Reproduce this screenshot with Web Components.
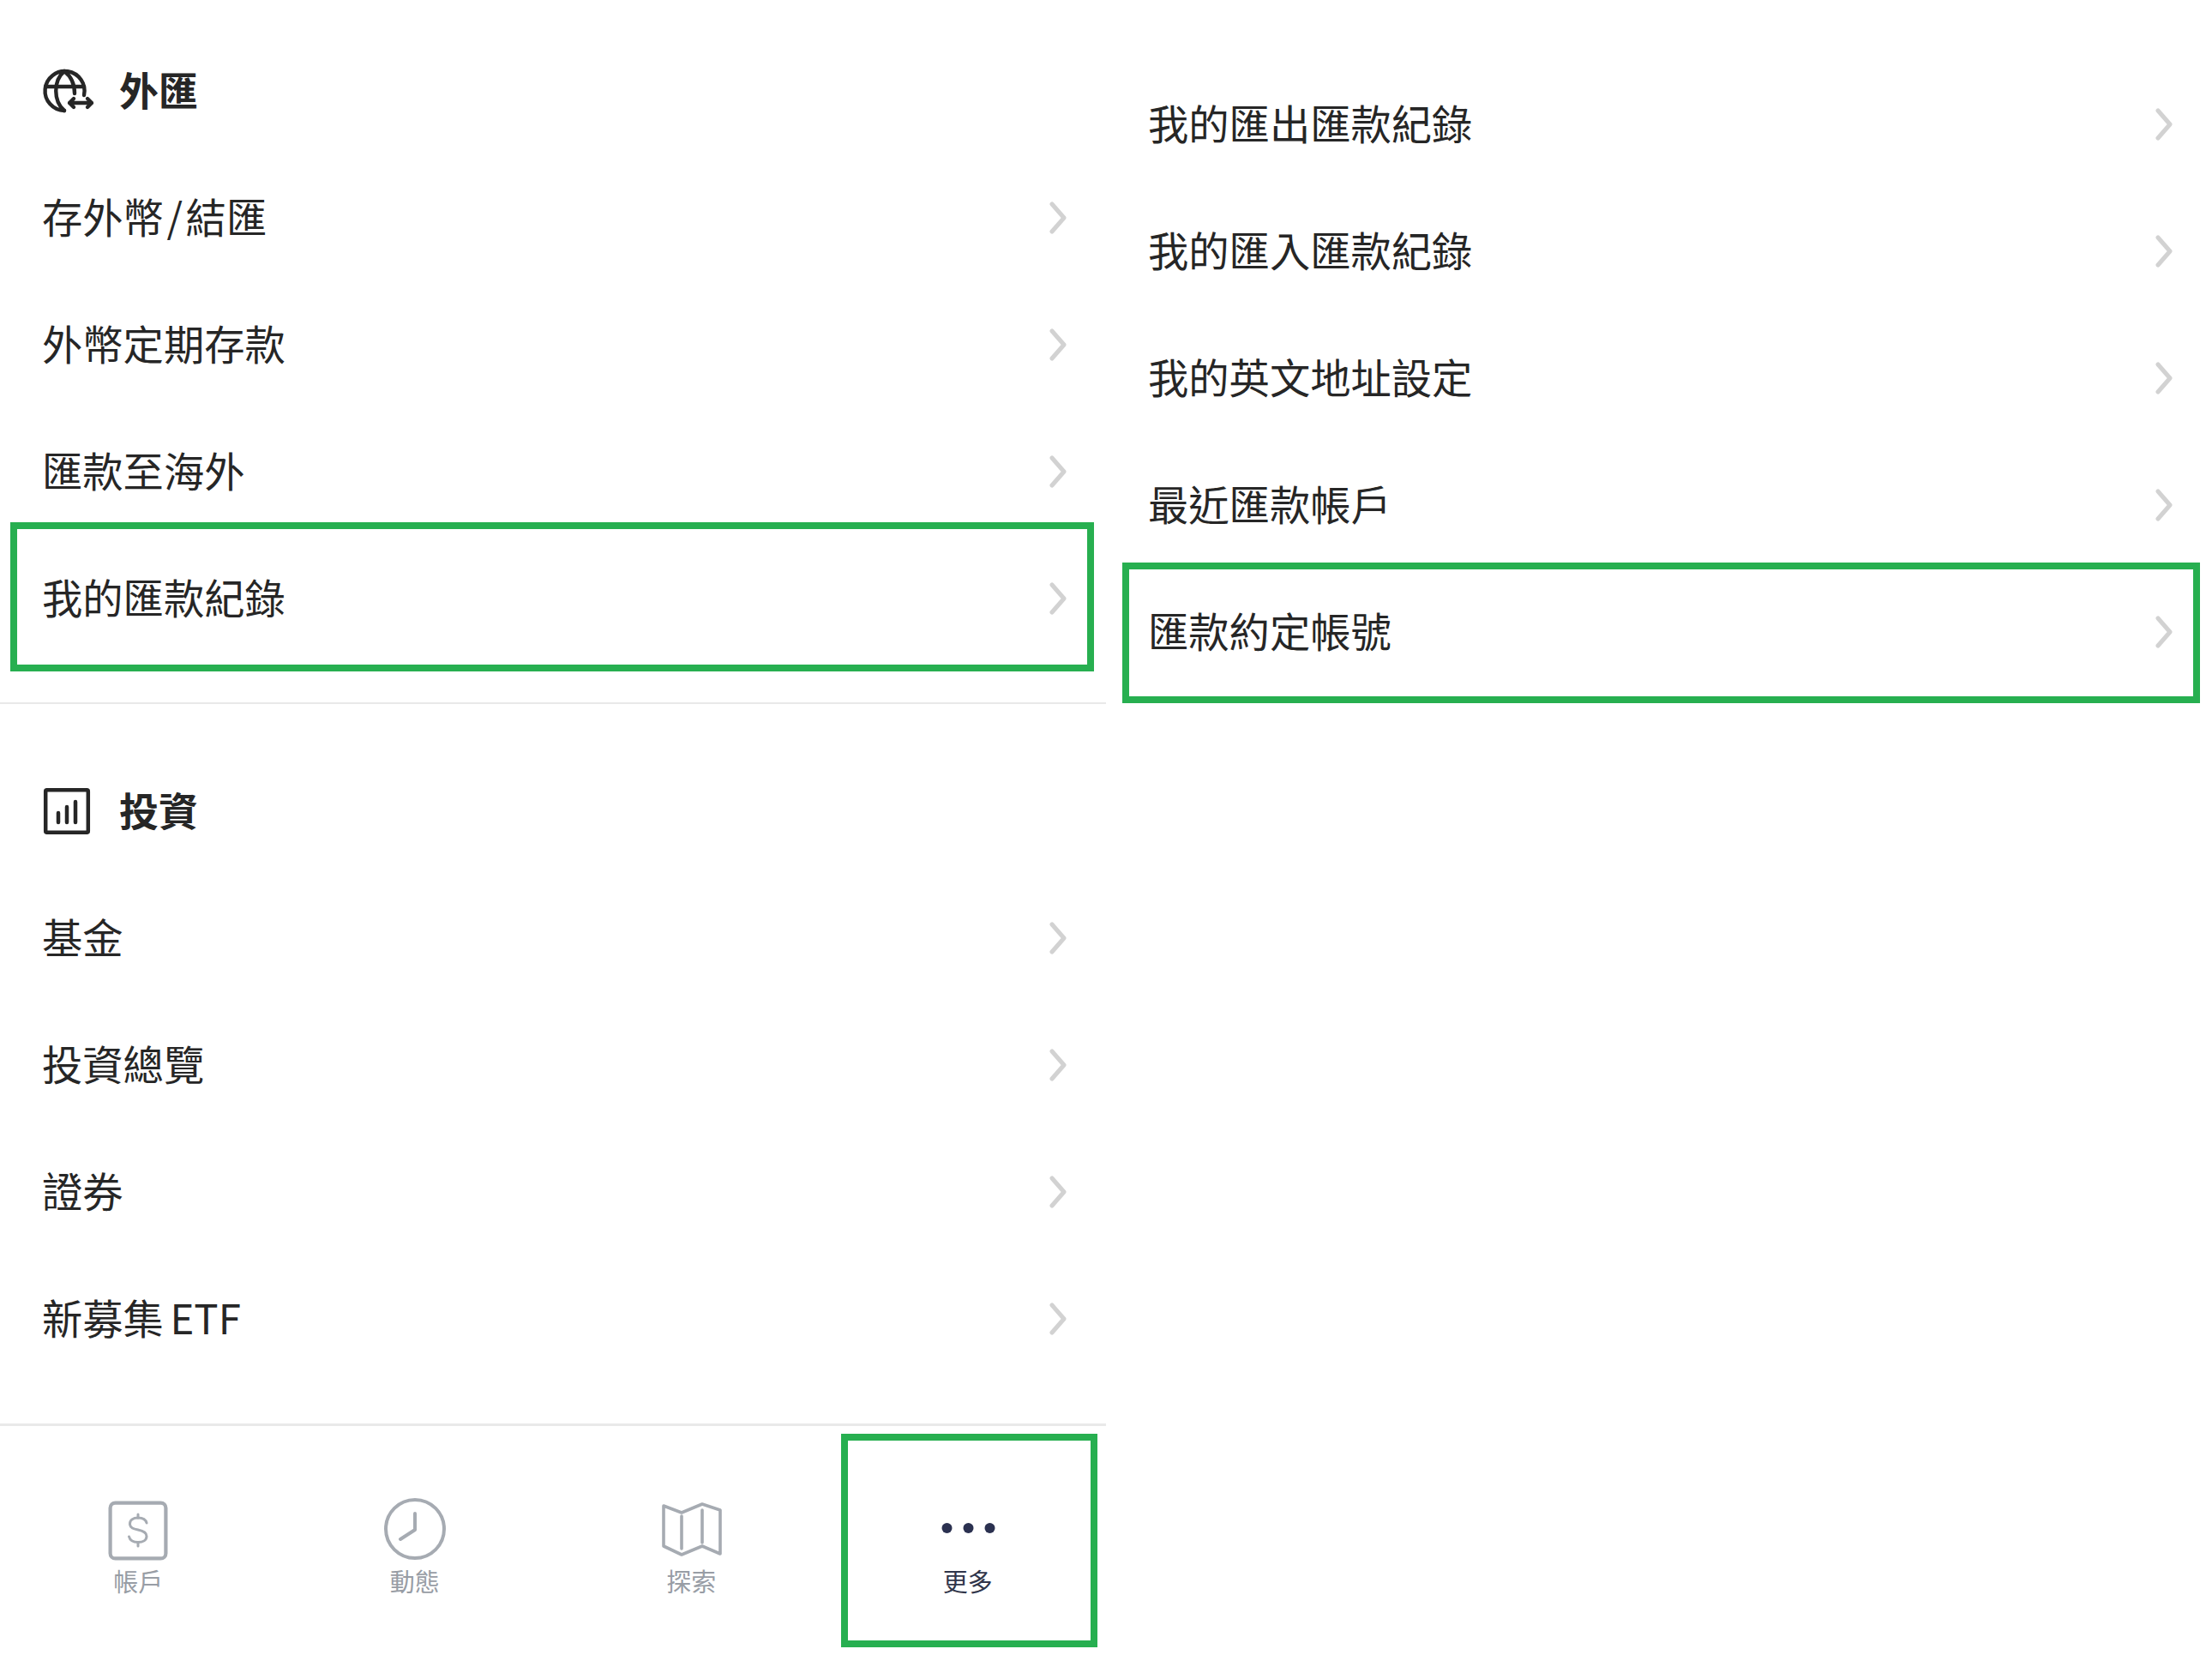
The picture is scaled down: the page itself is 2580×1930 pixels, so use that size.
<!DOCTYPE html>
<html lang="zh-Hant">
<head>
<meta charset="utf-8">
<title>更多</title>
<style>
  html, body { margin: 0; background: #fff; }
  body { font-family: "Noto Sans CJK TC", "Noto Sans", sans-serif; color: #262626; }
</style>
</head>
<body>
<more-page>
  <menu-panel slot="left" pad-top="31" class="left">
    <menu-section divider>
      <section-title label="外匯">
        <svg slot="icon" width="64" height="64" viewBox="0 0 64 64" fill="none" stroke="#262626" stroke-width="4.4" stroke-linecap="round" stroke-linejoin="round">
          <path d="M27 55A23 23 0 1 1 50 37"/>
          <path d="M27 9C14 20 14 44 27 55"/>
          <path d="M27 9C36 16 39 26 39 35"/>
          <path d="M5 27H50"/>
          <path d="M33 46H59M38 41L33 46L38 51M54 41L59 46L54 51"/>
        </svg>
      </section-title>
      <menu-row style="word-spacing:-7px">存外幣 / 結匯</menu-row>
      <menu-row>外幣定期存款</menu-row>
      <menu-row>匯款至海外</menu-row>
      <menu-row highlight style="--hl-top:-15px;--hl-bottom:-11px;--hl-left:12px;--hl-right:14px">我的匯款紀錄</menu-row>
    </menu-section>
    <menu-section>
      <section-title label="投資">
        <svg slot="icon" width="64" height="64" viewBox="0 0 64 64" fill="none" stroke="#262626" stroke-width="4.5" stroke-linecap="round" stroke-linejoin="round">
          <rect x="5.2" y="7.2" width="49.6" height="49.6" rx="1.5"/>
          <path d="M20 34V45M30 27V45M40 21V45"/>
        </svg>
      </section-title>
      <menu-row>基金</menu-row>
      <menu-row>投資總覽</menu-row>
      <menu-row>證券</menu-row>
      <menu-row style="word-spacing:-3px">新募集 ETF</menu-row>
    </menu-section>
    <tab-bar>
      <tab-item label="帳戶">
        <svg slot="icon" width="80" height="80" viewBox="0 0 80 80" fill="none" stroke="#a6abb2" stroke-width="4.2" stroke-linecap="round" stroke-linejoin="round">
          <rect x="7.6" y="9.6" width="64.8" height="64.8" rx="6"/>
          <path stroke-width="3" d="M50 33C49 29 45 27 40 27C34 27 30.5 30 30.5 34C30.5 39 35 40 40 41C45 42 50 44 50 48.5C50 53 45.5 55.5 40 55.5C34.5 55.5 30.5 53 29.5 49"/>
          <path stroke-width="3" d="M40 23V27M40 55.5V60"/>
        </svg>
      </tab-item>
      <tab-item label="動態">
        <svg slot="icon" width="80" height="80" viewBox="0 0 80 80" fill="none" stroke="#a6abb2" stroke-width="4" stroke-linecap="round" stroke-linejoin="round">
          <circle cx="40" cy="40" r="34"/>
          <path d="M40 22V41L23 52"/>
        </svg>
      </tab-item>
      <tab-item label="探索">
        <svg slot="icon" width="80" height="80" viewBox="0 0 80 80" fill="none" stroke="#a6abb2" stroke-width="3.6" stroke-linecap="round" stroke-linejoin="round">
          <path d="M8 13L29 21L53 11L74 18V69L53 60L29 70L8 60Z"/>
          <path d="M29 25V63M53 18V56"/>
        </svg>
      </tab-item>
      <tab-item label="更多" active>
        <svg slot="icon" width="80" height="80" viewBox="0 0 80 80" fill="#2b3150">
          <circle cx="15.5" cy="39" r="6"/>
          <circle cx="40.5" cy="39" r="6"/>
          <circle cx="65.5" cy="39" r="6"/>
        </svg>
      </tab-item>
    </tab-bar>
  </menu-panel>
  <menu-panel slot="right" pad-top="71">
    <menu-row>我的匯出匯款紀錄</menu-row>
    <menu-row>我的匯入匯款紀錄</menu-row>
    <menu-row>我的英文地址設定</menu-row>
    <menu-row>最近匯款帳戶</menu-row>
    <menu-row highlight style="--hl-top:-7px;--hl-bottom:-9px;--hl-left:19px;--hl-right:14px">匯款約定帳號</menu-row>
  </menu-panel>
</more-page>

<script>
class MorePage extends HTMLElement {
  constructor() {
    super();
    this.attachShadow({ mode: 'open' }).innerHTML = `
      <style>
        :host { display: grid; grid-template-columns: 1290px 1290px; width: 2580px; height: 1930px; overflow: hidden; background: #fff; }
      </style>
      <slot name="left"></slot>
      <slot name="right"></slot>`;
  }
}

class MenuPanel extends HTMLElement {
  constructor() {
    super();
    this.attachShadow({ mode: 'open' }).innerHTML = `
      <style>
        :host { display: flex; flex-direction: column; box-sizing: border-box; height: 1930px; }
      </style>
      <slot></slot>`;
  }
  connectedCallback() {
    this.style.paddingTop = (this.getAttribute('pad-top') || 0) + 'px';
  }
}

class MenuSection extends HTMLElement {
  constructor() {
    super();
    this.attachShadow({ mode: 'open' }).innerHTML = `
      <style>
        :host { display: block; padding-bottom: 48px; }
        :host([divider]) { border-bottom: 2px solid #e9e9e9; padding-bottom: 47px; margin-bottom: 50px; }
      </style>
      <slot></slot>`;
  }
}

class SectionTitle extends HTMLElement {
  constructor() {
    super();
    this.attachShadow({ mode: 'open' }).innerHTML = `
      <style>
        :host { display: flex; align-items: center; gap: 27px; height: 149px; padding-left: 48px; box-sizing: border-box; }
        .label { font-size: 46px; font-weight: 700; line-height: 74px; color: #262626; padding-bottom: 5px; }
        ::slotted(svg) { display: block; flex: none; }
      </style>
      <slot name="icon"></slot>
      <span class="label"></span>`;
  }
  connectedCallback() {
    this.shadowRoot.querySelector('.label').textContent = this.getAttribute('label');
  }
}

class MenuRow extends HTMLElement {
  constructor() {
    super();
    this.attachShadow({ mode: 'open' }).innerHTML = `
      <style>
        :host { display: flex; align-items: center; justify-content: space-between; position: relative; height: 148px; padding: 0 46px 0 49px; box-sizing: border-box; font-size: 47.3px; color: #262626; }
        span { padding-bottom: 6px; }
        svg { display: block; flex: none; }
        :host([highlight])::after {
          content: ""; position: absolute; box-sizing: border-box;
          top: var(--hl-top); bottom: var(--hl-bottom); left: var(--hl-left); right: var(--hl-right);
          border: 8px solid #27af50;
        }
      </style>
      <span><slot></slot></span>
      <svg width="20" height="38" viewBox="0 0 20 38" fill="none" stroke="#d2d2d2" stroke-width="5" stroke-linecap="round" stroke-linejoin="round">
        <path d="M3 3L17 19L3 35"/>
      </svg>`;
  }
}

class TabBar extends HTMLElement {
  constructor() {
    super();
    this.attachShadow({ mode: 'open' }).innerHTML = `
      <style>
        :host { display: grid; grid-template-columns: repeat(4, 1fr); flex: 1; border-top: 3px solid #e9e9e9; }
      </style>
      <slot></slot>`;
  }
}

class TabItem extends HTMLElement {
  constructor() {
    super();
    this.attachShadow({ mode: 'open' }).innerHTML = `
      <style>
        :host { display: flex; flex-direction: column; align-items: center; position: relative; padding-top: 80px; font-size: 29px; line-height: 40px; color: #989da5; }
        :host([active]) { color: #30354a; }
        :host([active])::after {
          content: ""; position: absolute; box-sizing: border-box;
          top: 9px; bottom: 9px; left: 13px; right: 10px;
          border: 8px solid #27af50;
        }
        ::slotted(svg) { display: block; }
      </style>
      <slot name="icon"></slot>
      <span class="label"></span>`;
  }
  connectedCallback() {
    this.shadowRoot.querySelector('.label').textContent = this.getAttribute('label');
  }
}

customElements.define('more-page', MorePage);
customElements.define('menu-panel', MenuPanel);
customElements.define('menu-section', MenuSection);
customElements.define('section-title', SectionTitle);
customElements.define('menu-row', MenuRow);
customElements.define('tab-bar', TabBar);
customElements.define('tab-item', TabItem);
</script>
</body>
</html>
